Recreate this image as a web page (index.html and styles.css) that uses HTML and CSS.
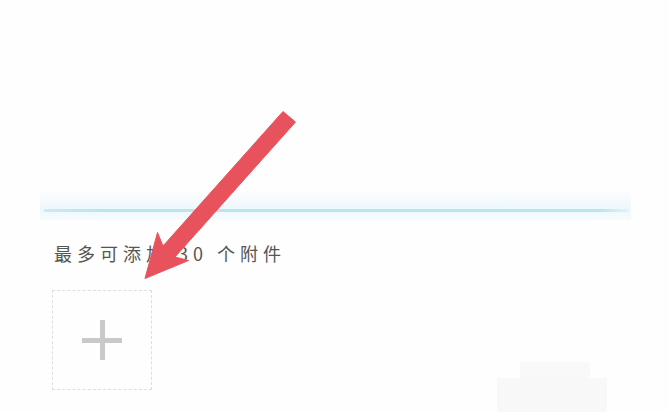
FILE: index.html
```html
<!DOCTYPE html>
<html lang="zh">
<head>
<meta charset="utf-8">
<link rel="stylesheet" href="styles.css">
</head>
<body>
<div class="page">
  <div class="top"></div>
  <div class="divider-band"><div class="divider"></div></div>
  <div class="hint">最多可添加 30 个附件</div>
  <div class="upload">
    <div class="plus"></div>
  </div>
  <div class="ghost"></div>
  <div class="ghost-top"></div>
  <svg class="arrow" width="669" height="412" viewBox="0 0 669 412">
    <polygon points="283,111.5 295.5,122 175,257 188.5,260.5 145,278.5 157.5,232.5 163,246" fill="#e8525c" stroke="#e8525c" stroke-width="1" stroke-linejoin="round"/>
  </svg>
</div>
</body>
</html>
```
FILE: styles.css
```css
html, body {
  margin: 0;
  padding: 0;
  background: #fefefe;
}
.page {
  position: relative;
  width: 669px;
  height: 412px;
  overflow: hidden;
  font-family: "Noto Sans CJK SC", "Noto Sans", sans-serif;
}
.top {
  height: 192px;
}
.divider-band {
  margin: 0 38px 0 40px;
  height: 28px;
  background: linear-gradient(#fbfdfe, #eef7fb 60%, #f7fbfd);
  display: flex;
  flex-direction: column;
  justify-content: flex-start;
}
.divider {
  margin: 17px 2px 0 4px;
  height: 3px;
  background: linear-gradient(90deg, #c8ecf0, #b9e6ec 10%, #b9e6ec 95%, #e4f4f7);
}
.hint {
  margin: 20px 0 0 54px;
  font-size: 18px;
  line-height: 26px;
  letter-spacing: 5px;
  color: #555;
}
.upload {
  margin: 24px 0 0 52px;
  width: 98px;
  height: 98px;
  border: 1px dashed #dedede;
  display: flex;
  align-items: center;
  justify-content: center;
}
.plus {
  position: relative;
  width: 40px;
  height: 40px;
}
.plus::before, .plus::after {
  content: "";
  position: absolute;
  background: #c9c9c9;
}
.plus::before {
  left: 0;
  right: 0;
  top: 18px;
  height: 5px;
}
.plus::after {
  top: 0;
  bottom: 0;
  left: 18px;
  width: 5px;
}
.ghost {
  position: absolute;
  left: 497px;
  top: 378px;
  width: 110px;
  height: 34px;
  background: #f8f8f8;
}
.ghost-top {
  position: absolute;
  left: 520px;
  top: 362px;
  width: 70px;
  height: 16px;
  background: #f9f9f9;
}
.arrow {
  position: absolute;
  left: 0;
  top: 0;
}
```
